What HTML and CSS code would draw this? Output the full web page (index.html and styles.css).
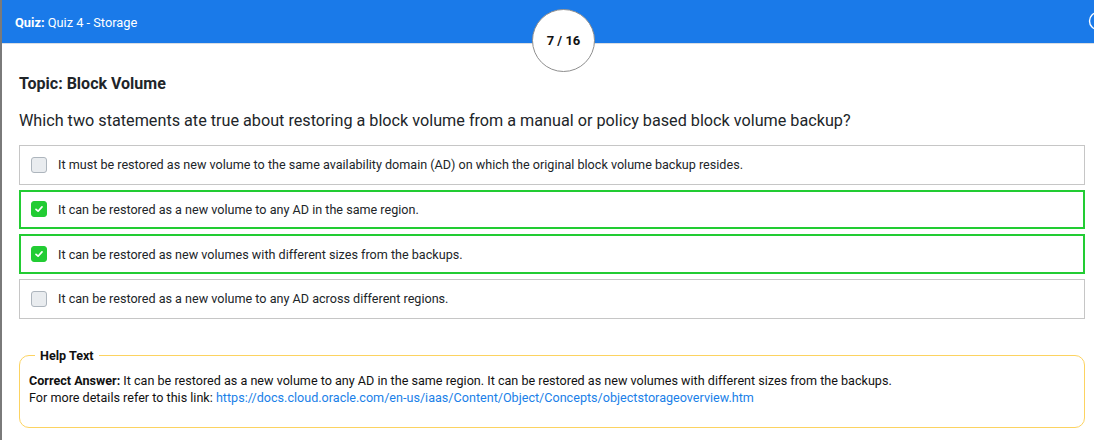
FILE: index.html
```html
<!DOCTYPE html>
<html>
<head>
<meta charset="utf-8">
<link rel="stylesheet" href="styles.css">
</head>
<body>
<div class="page">
  <header class="bar">
    <div class="title"><b>Quiz:</b> Quiz 4 - Storage</div>
    <svg class="bar-icon" width="20" height="20" viewBox="0 0 20 20"><circle cx="10" cy="10" r="8.5" fill="none" stroke="#fff" stroke-width="1.4"/></svg>
    <div class="counter">7 / 16</div>
  </header>
  <main class="content">
    <h2 class="topic">Topic: Block Volume</h2>
    <p class="question">Which two statements ate true about restoring a block volume from a manual or policy based block volume backup?</p>
    <div class="options">
      <label class="opt"><span class="box"></span><span>It must be restored as new volume to the same availability domain (AD) on which the original block volume backup resides.</span></label>
      <label class="opt correct"><span class="box checked"><svg width="10" height="10" viewBox="0 0 10 10"><path d="M2 5.3 L4.1 7.2 L8 2.9" fill="none" stroke="#fff" stroke-width="1.7" stroke-linecap="round" stroke-linejoin="round"/></svg></span><span>It can be restored as a new volume to any AD in the same region.</span></label>
      <label class="opt correct"><span class="box checked"><svg width="10" height="10" viewBox="0 0 10 10"><path d="M2 5.3 L4.1 7.2 L8 2.9" fill="none" stroke="#fff" stroke-width="1.7" stroke-linecap="round" stroke-linejoin="round"/></svg></span><span>It can be restored as new volumes with different sizes from the backups.</span></label>
      <label class="opt"><span class="box"></span><span>It can be restored as a new volume to any AD across different regions.</span></label>
    </div>
    <fieldset class="help">
      <legend>Help Text</legend>
      <div><b>Correct Answer:</b> It can be restored as a new volume to any AD in the same region. It can be restored as new volumes with different sizes from the backups.</div>
      <div>For more details refer to this link: <a href="#">https://docs.cloud.oracle.com/en-us/iaas/Content/Object/Concepts/objectstorageoverview.htm</a></div>
    </fieldset>
  </main>
</div>
</body>
</html>
```
FILE: styles.css
```css
* { box-sizing: border-box; }
html, body { margin: 0; padding: 0; }
body {
  width: 1094px;
  height: 440px;
  overflow: hidden;
  background: #fff;
  font-family: Roboto, "Liberation Sans", sans-serif;
  color: #212529;
}
.page {
  border-left: 2px solid #7a7a7a;
  min-height: 440px;
}
.bar {
  position: relative;
  height: 44px;
  background: #1a7ae9;
  border-bottom: 1px solid #d8dde3;
  display: flex;
  align-items: center;
  justify-content: space-between;
  padding-left: 13px;
  padding-top: 1px;
  color: #fff;
  font-size: 12.8px;
}
.title b { font-weight: 700; }
.bar-icon { margin-right: -14px; margin-top: -2px; }
.counter {
  position: absolute;
  left: 530px;
  top: 9px;
  width: 63px;
  height: 63px;
  border-radius: 50%;
  background: #fff;
  border: 1px solid #8e8e8e;
  color: #111;
  font-weight: 700;
  font-size: 13px;
  display: flex;
  align-items: center;
  justify-content: center;
}
.content {
  padding: 0 9px 0 17px;
}
.topic {
  margin: 0;
  padding-top: 30px;
  font-size: 16px;
  font-weight: 700;
  line-height: 20px;
  color: #212529;
}
.question {
  margin: 17px 0 0;
  font-size: 16.2px;
  line-height: 20px;
  color: #212529;
}
.options {
  margin-top: 14px;
  display: flex;
  flex-direction: column;
  gap: 5.2px;
}
.opt {
  height: 39.5px;
  border: 1px solid #c6c6c6;
  display: flex;
  align-items: center;
  padding-left: 11px;
  gap: 11px;
  font-size: 12.6px;
  color: #212529;
}
.opt.correct {
  border: 2px solid #22cc33;
  padding-left: 10px;
}
.box {
  width: 16px;
  height: 16px;
  border-radius: 3px;
  background: #e9ecef;
  border: 1px solid #adb5bd;
  display: flex;
  align-items: center;
  justify-content: center;
  flex: none;
}
.box.checked {
  background: #22cc33;
  border-color: #22cc33;
}
.help {
  margin: 28.5px 0 0;
  border: 1px solid #fcd361;
  border-radius: 10px;
  padding: 8px 9px 21px;
  font-size: 12.6px;
  line-height: 17px;
  color: #111;
}
.help legend {
  font-weight: 700;
  font-size: 12.6px;
  padding: 0 5px;
  margin-left: 6px;
}
.help b { font-weight: 700; }
.help a { color: #1a7fe8; text-decoration: none; }
```
